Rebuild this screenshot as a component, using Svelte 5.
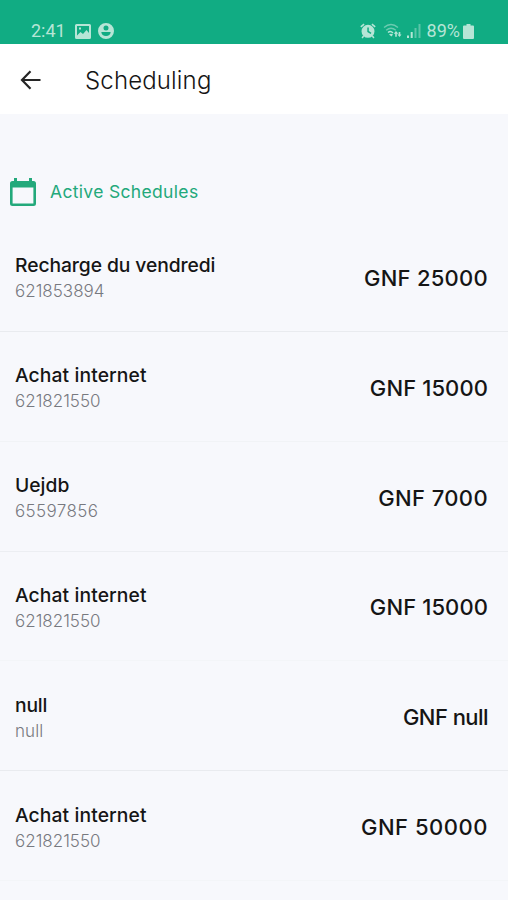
<script>
  const schedules = [
    { name: 'Recharge du vendredi', number: '621853894', amount: '25000', ns: -0.09, ps: 0, as: 0.26, line: '#e9ebef' },
    { name: 'Achat internet', number: '621821550', amount: '15000', ns: 0.1, ps: 0, as: 0.1, line: '#f1f3f6' },
    { name: 'Uejdb', number: '65597856', amount: '7000', ns: 0, ps: 0.37, as: 0.37, line: '#eceef2' },
    { name: 'Achat internet', number: '621821550', amount: '15000', ns: 0.1, ps: 0, as: 0.1, line: '#f3f5f8' },
    { name: 'null', number: 'null', amount: 'null', ns: -0.2, ps: 0.1, as: -0.55, line: '#e9ebef' },
    { name: 'Achat internet', number: '621821550', amount: '50000', ns: 0.1, ps: 0, as: 0.52, line: '#f3f5f8' }
  ];
</script>

<div class="screen">
  <div class="status">
    <div class="left">
      <span class="time">2:41</span>
      <svg class="photo" width="16" height="15" viewBox="0 0 16 15"><path fill-rule="evenodd" d="M1.500 0h13Q16 0 16 1.500v12q0 1.500-1.500 1.500h-13Q0 15 0 13.500v-12Q0 0 1.500 0zM2 2v9.500l3.500-3.500 2.500 2 3.500-4 2.500 3V2zM4 3.500h2v2H4z" /></svg>
      <svg width="16" height="16" viewBox="0 0 16 16"><path fill-rule="evenodd" d="M8 0a8 8 0 1 0 0 16A8 8 0 0 0 8 0zM8 2.600a2.500 2.500 0 1 1 0 5 2.500 2.500 0 0 1 0-5zM3.300 9h9.400q-.5 4-4.700 4T3.300 9z" /></svg>
    </div>
    <div class="right">
      <svg width="16" height="16" viewBox="0 0 16 16"><path d="M.3 3.300 3.600.6l1 1.200-3.300 2.700zM15.700 3.300 12.400.6l-1 1.200 3.300 2.700z" /><path fill-rule="evenodd" d="M8 1.800a6.500 6.500 0 1 0 0 13 6.500 6.500 0 0 0 0-13zM7.300 4.500h1.500v3.600l2.600 1.600-.7 1.200-3.400-2z" /><path d="m3 12.500 1.200 1-1.500 2-1.200-1zM13 12.500l-1.200 1 1.500 2 1.200-1z" /></svg>
      <svg class="wifi" width="19" height="16" viewBox="0 0 19 16"><g fill="none" stroke="#b6e5d6" stroke-width="1.400"><path opacity=".55" d="M1 4.500Q8 -1.500 15 4.500M3.200 7.300q4.800-4 9.600 0" /><path d="M5 9.500q2.500-2.200 5 .5" /></g><path d="m8.500 13.500-2.500-2q2-1.500 4 0zM13 8l2.300 2.700h-1.500v3h-1.600v-3h-1.500zM16.500 14l-2-2.600h1.200V9h1.600v2.400h1.200z" /></svg>
      <svg class="signal" width="14" height="14" viewBox="0 0 14 14"><path d="M0 11.500h2V14H0zM3.700 8h2v6h-2z" /><path opacity=".45" d="M7.500 4h2v10h-2zM11.500 0h2v14h-2z" /></svg>
      <span class="percent">89%</span>
      <svg class="battery" width="11" height="15" viewBox="0 0 11 15"><path d="M3.500 0h4v1.500H10q1 0 1 1V14q0 1-1 1H1q-1 0-1-1V2.500q0-1 1-1h2.500z" /></svg>
    </div>
  </div>

  <header>
    <svg width="21" height="20" viewBox="0 0 21 20" fill="none" stroke="#252525" stroke-width="2.200"><path d="M10.500 1.300 2 10l8.500 8.700M2 10h18.500" /></svg>
    <h1>Scheduling</h1>
  </header>

  <div class="section">
    <svg width="26" height="29" viewBox="0 0 26 29"><path fill-rule="evenodd" d="M4 0h3v3h12V0h3v3h1.500Q26 3 26 5.500v20q0 2.500-2.500 2.500h-21Q0 28 0 25.500v-20Q0 3 2.500 3H4zM2.600 9.500v16h20.800v-16z" /></svg>
    <h2>Active Schedules</h2>
  </div>

  <ul>
    {#each schedules as s}
      <li style="border-color: {s.line}">
        <div class="info">
          <span class="name" style="letter-spacing: {s.ns}px">{s.name}</span>
          <span class="number" style="letter-spacing: {s.ps}px">{s.number}</span>
        </div>
        <span class="amount" style="letter-spacing: {s.as}px">GNF {s.amount}</span>
      </li>
    {/each}
  </ul>
</div>

<style>
  :global(body) { background: #f7f8fc; }
  .screen { height: 900px; overflow: hidden; background: #f7f8fc; font-family: Inter, sans-serif; color: #151515; white-space: nowrap; }
  .status { height: 44px; box-sizing: border-box; padding: 18px 34px 0 31px; background: #11ac83; display: flex; justify-content: space-between; align-items: flex-start; color: #b6e5d6; font-family: Roboto, sans-serif; font-size: 18px; line-height: 26px; }
  .status svg { fill: #b6e5d6; flex: none; }
  .left, .right { display: flex; align-items: center; height: 26px; }
  .left { gap: 8px; }
  .left svg { margin-left: -1px; }
  .left .photo { margin-left: 1px; }
  .wifi { margin-left: 7px; }
  .signal { margin-left: 5px; }
  .percent { margin-left: 6px; }
  .battery { margin-left: 3px; }
  header { height: 70px; box-sizing: border-box; padding: 2px 0 0 20px; background: #fff; display: flex; align-items: center; gap: 44px; }
  h1 { margin: 1px 0 0; font-size: 24px; font-weight: 300; line-height: 30px; letter-spacing: 0.15px; }
  .section { height: 108px; padding: 64px 0 0 10px; box-sizing: border-box; display: flex; align-items: flex-start; gap: 14px; }
  .section svg { fill: #23a97b; }
  h2 { margin: 3px 0 0; font-size: 17.500px; line-height: 22px; font-weight: 400; letter-spacing: 0.33px; color: #23a97b; }
  ul { list-style: none; margin: 0; padding: 0; }
  li { height: 109.850px; box-sizing: border-box; padding: 4px 20px 0 15px; border-bottom: 1px solid; display: flex; justify-content: space-between; align-items: center; }
  .info { display: flex; flex-direction: column; }
  .name { font-size: 19.300px; line-height: 26px; font-weight: 500; }
  .number { font-size: 17px; line-height: 26px; font-weight: 300; color: #777980; }
  .amount { font-size: 22px; line-height: 28px; font-weight: 500; margin-top: -1px; }
</style>
